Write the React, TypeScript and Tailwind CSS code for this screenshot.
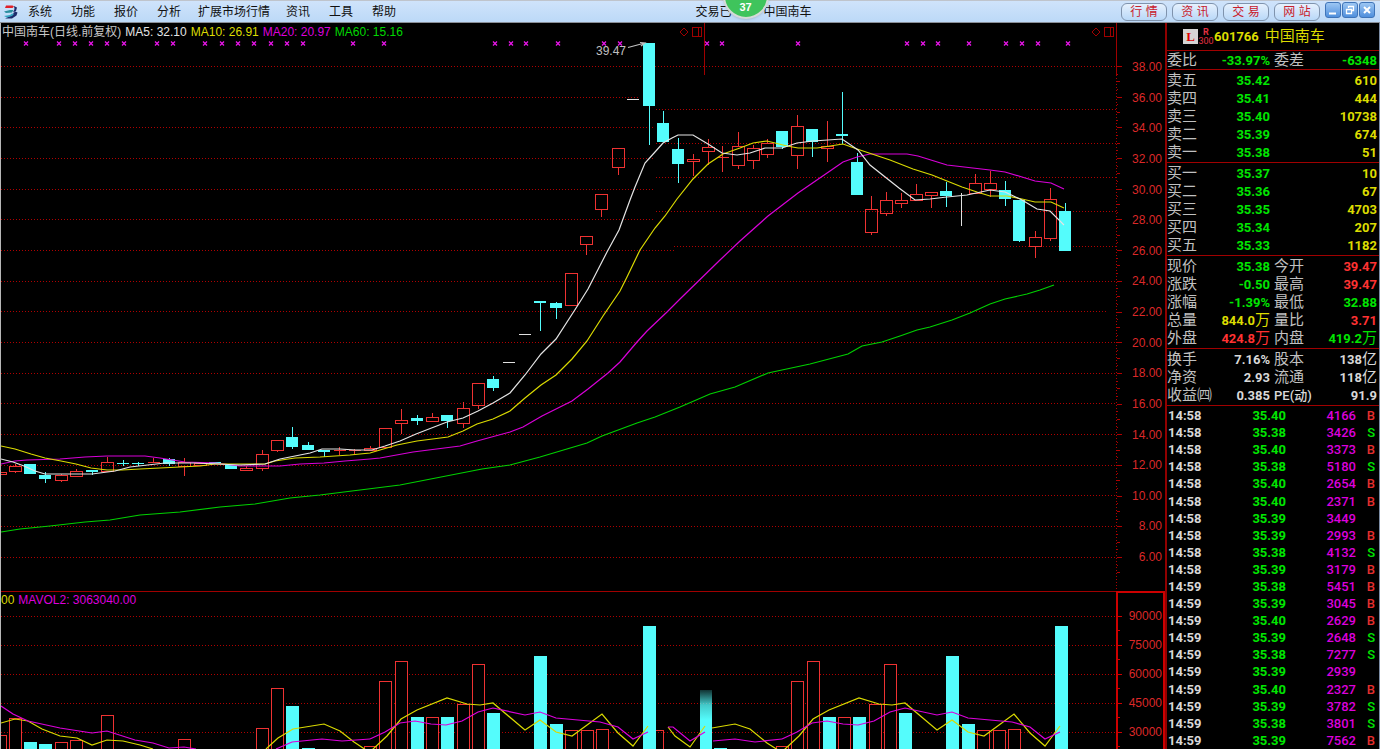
import React from 'react';

type Kind = 'up' | 'down' | 'flat';
// x centre, body top, body bottom, high, low
type Candle = [Kind, number, number, number, number, number];
type Bar = [Kind, number, number];

const SANS = "font-['Liberation_Sans','Noto_Sans_CJK_SC',sans-serif]";
const PANEL = "font-['Roboto','Noto_Sans_CJK_SC',sans-serif]";

const RED = '#ee3232';
const CYAN = '#54fcfc';
const GRID = '#b00000';

const candles: Candle[] = [
  ['up', 0, 472, 474, 472, 474],
  ['up', 15, 466, 471, 464, 473],
  ['down', 30, 464, 474, 464, 474],
  ['down', 45, 475, 479, 472, 483],
  ['up', 61, 475, 480, 474, 482],
  ['up', 76, 471, 476, 469, 476],
  ['down', 92, 470, 472, 470, 475],
  ['up', 107, 462, 471, 457, 471],
  ['down', 123, 463, 464, 460, 466],
  ['down', 138, 463, 464, 462, 466],
  ['up', 153, 462, 463, 458, 463],
  ['down', 169, 459, 464, 458, 466],
  ['up', 184, 462, 466, 458, 476],
  ['up', 200, 463, 465, 463, 465],
  ['down', 215, 462, 464, 462, 464],
  ['down', 231, 465, 469, 465, 469],
  ['up', 246, 468, 470, 466, 470],
  ['up', 262, 454, 468, 450, 471],
  ['up', 277, 440, 450, 440, 452],
  ['down', 292, 437, 447, 427, 449],
  ['down', 308, 445, 450, 442, 450],
  ['down', 324, 450, 452, 450, 457],
  ['up', 339, 450, 451, 447, 455],
  ['up', 354, 450, 451, 449, 454],
  ['up', 370, 448, 450, 446, 450],
  ['up', 385, 428, 447, 428, 447],
  ['up', 401, 420, 423, 409, 434],
  ['down', 417, 418, 421, 415, 425],
  ['up', 432, 417, 421, 413, 421],
  ['down', 447, 415, 421, 415, 428],
  ['up', 463, 408, 423, 402, 428],
  ['up', 478, 383, 405, 383, 409],
  ['down', 493, 379, 388, 376, 391],
  ['flat', 509, 362, 363, 362, 363],
  ['flat', 525, 334, 335, 334, 335],
  ['down', 540, 301, 303, 301, 331],
  ['down', 556, 303, 308, 302, 319],
  ['up', 571, 273, 305, 273, 305],
  ['up', 586, 236, 244, 236, 255],
  ['up', 601, 194, 209, 194, 217],
  ['up', 618, 148, 167, 148, 175],
  ['flat', 633, 99, 100, 99, 100],
  ['down', 649, 43, 106, 43, 145],
  ['down', 663, 123, 142, 111, 142],
  ['down', 678, 149, 164, 138, 183],
  ['up', 693, 159, 161, 154, 176],
  ['up', 708, 147, 151, 139, 165],
  ['up', 722, 157, 158, 146, 172],
  ['up', 738, 146, 165, 132, 169],
  ['up', 753, 148, 160, 145, 169],
  ['up', 767, 143, 154, 139, 158],
  ['down', 782, 131, 147, 131, 149],
  ['up', 797, 126, 155, 115, 169],
  ['down', 812, 129, 142, 129, 157],
  ['up', 827, 146, 148, 121, 162],
  ['down', 842, 134, 136, 92, 144],
  ['down', 857, 162, 195, 153, 195],
  ['up', 871, 209, 232, 196, 235],
  ['up', 886, 200, 213, 192, 216],
  ['up', 901, 200, 203, 193, 208],
  ['up', 916, 194, 200, 184, 200],
  ['up', 931, 192, 195, 192, 208],
  ['down', 946, 191, 196, 182, 207],
  ['flat', 961, 194, 195, 193, 226],
  ['up', 975, 183, 193, 174, 193],
  ['up', 990, 183, 189, 171, 197],
  ['down', 1005, 190, 199, 181, 206],
  ['down', 1019, 200, 241, 200, 242],
  ['up', 1035, 237, 246, 231, 258],
  ['up', 1050, 199, 238, 188, 241],
  ['down', 1065, 211, 251, 203, 251],
];

const ma5 =
  '1,459 13,462 24,466 35,471 45,474 80,474 92,474 115,471 130,467 165,463 195,463 240,465 265,464 280,459 310,453 322,449 340,449 355,450 372,450 385,446 400,441 416,434 447,422 463,418 478,411 493,403 510,393 525,375 541,354 556,339 578,305 588,289 607,252 619,230 630,200 635,187 645,163 655,152 663,143 672,138 678,135 693,135 708,144 722,153 737,155 750,153 765,148 782,148 797,143 813,141 842,139 858,150 870,165 899,188 915,200 930,199 947,197 967,195 990,190 1005,192 1022,200 1037,209 1050,211 1064,225';
const ma10 =
  '1,446 15,449 31,454 45,458 61,461 76,464 91,468 107,470 122,470 140,469 180,467 200,466 215,464 250,464 265,464 275,461 295,458 320,457 350,455 370,453 380,450 397,445 417,441 448,437 463,431 477,424 493,419 510,411 525,398 541,385 556,375 572,359 587,341 603,316 620,291 627,277 640,250 655,228 665,216 677,199 693,179 708,164 723,154 740,148 753,143 767,141 787,146 798,148 817,148 843,144 857,149 890,160 913,169 932,175 947,181 962,187 977,192 990,196 1007,196 1022,199 1035,202 1051,202 1064,208';
const ma20 =
  '1,464 15,461 27,460 60,459 85,457 107,456 145,456 160,458 185,462 215,463 240,466 280,466 300,464 324,463 345,461 370,459 380,458 413,452 460,446 477,441 510,432 523,427 542,416 572,401 588,389 608,373 620,362 637,342 647,331 667,312 680,299 720,260 740,241 768,216 798,193 830,171 843,162 857,157 870,154 907,154 918,156 947,165 990,170 1005,172 1022,177 1035,181 1051,183 1064,189';
const ma60 =
  '1,532 20,529 50,526 85,522 110,520 140,515 180,512 220,507 255,504 290,498 320,495 360,490 400,485 482,469 510,465 540,457 587,443 602,436 637,423 655,417 680,407 710,394 735,387 768,373 810,364 848,354 862,346 882,342 900,336 917,330 930,327 952,320 970,313 990,304 1005,299 1027,294 1040,290 1054,285';

const marks = [
  25, 58, 74, 90, 106, 123, 156, 172, 204, 221, 237, 253, 270, 286, 302, 352, 383, 494, 510, 525, 557, 603, 619,
  706, 721, 797, 906, 922, 937, 968, 1005, 1021, 1037, 1067,
];

// [y, from, to]
const gridLines: [number, number, number][] = [
  [66, 1, 1117], [97, 1, 640], [127, 1, 655], [158, 1, 655], [189, 1, 655], [219, 1, 655], [250, 1, 674],
  [109, 656, 1117], [143, 656, 1117], [177, 656, 1117], [211, 656, 1117], [246, 674, 1117],
  [281, 1, 1117], [311, 1, 1107], [342, 1, 1117], [373, 1, 1117], [403, 1, 1117], [434, 1, 1117],
  [465, 1, 1117], [495, 1, 1117], [526, 1, 1117], [557, 1, 1117],
];

const priceLabels = Array.from({ length: 17 }, (_, i) => (38 - i * 2).toFixed(2));
const priceTicks = Array.from({ length: 67 }, (_, i) => ({
  y: Math.round(66 + (i * 491) / 64),
  len: i % 4 === 0 ? 5 : i % 2 === 0 ? 3 : 1,
}));

const cycle: Bar[] = [
  ['up', 370, 746], ['up', 385, 681], ['up', 401, 661], ['down', 417, 717], ['up', 432, 717], ['down', 447, 717],
  ['up', 463, 704], ['up', 478, 664], ['down', 493, 713], ['down', 540, 656], ['down', 556, 724], ['up', 571, 730],
  ['up', 587, 730], ['up', 602, 729], ['down', 649, 626],
];
const bars: Bar[] = [
  ['up', 0, 735], ['up', 15, 718], ['down', 30, 742], ['down', 45, 744], ['up', 61, 742], ['up', 76, 740],
  ['up', 107, 715], ['up', 184, 739], ['up', 262, 728], ['up', 277, 688], ['down', 292, 706], ['down', 308, 748],
  ...cycle,
  ['down', 720, 748],
  ...cycle.map(([k, x, y]): Bar => [k, x + 412, y]),
];

const volFast: [number, number][] = [
  [372, 750], [387, 736], [401, 719], [417, 710], [447, 698], [467, 704], [480, 705], [493, 703], [525, 730],
  [540, 720], [556, 732], [572, 736], [602, 714], [618, 733], [633, 746], [648, 726],
];
const volSlow: [number, number][] = [
  [370, 739], [385, 732], [400, 723], [415, 721], [431, 724], [446, 725], [462, 721], [478, 712], [493, 708],
  [525, 715], [540, 712], [556, 718], [600, 722], [618, 727], [633, 739], [648, 732],
];
const toPoints = (pts: [number, number][], dx = 0) => pts.map(([x, y]) => `${x + dx},${y}`).join(' ');

interface Quote {
  label: string;
  price: string;
  qty: string;
}

const asks: Quote[] = [
  { label: '卖五', price: '35.42', qty: '610' },
  { label: '卖四', price: '35.41', qty: '444' },
  { label: '卖三', price: '35.40', qty: '10738' },
  { label: '卖二', price: '35.39', qty: '674' },
  { label: '卖一', price: '35.38', qty: '51' },
];
const bids: Quote[] = [
  { label: '买一', price: '35.37', qty: '10' },
  { label: '买二', price: '35.36', qty: '67' },
  { label: '买三', price: '35.35', qty: '4703' },
  { label: '买四', price: '35.34', qty: '207' },
  { label: '买五', price: '35.33', qty: '1182' },
];

const G = 'text-[#00e600]';
const R = 'text-[#ff3232]';
const Y = 'text-[#dcdc00]';
const W = 'text-[#d8d8d8]';

// label, value, unit, colour
type Cell = [string, string, string, string];

const ratio: [Cell, Cell][] = [[['委比', '-33.97%', '', G], ['委差', '-6348', '', G]]];
const stats: [Cell, Cell][] = [
  [['现价', '35.38', '', G], ['今开', '39.47', '', R]],
  [['涨跌', '-0.50', '', G], ['最高', '39.47', '', R]],
  [['涨幅', '-1.39%', '', G], ['最低', '32.88', '', G]],
  [['总量', '844.0', '万', Y], ['量比', '3.71', '', R]],
  [['外盘', '424.8', '万', R], ['内盘', '419.2', '万', G]],
];
const finance: [Cell, Cell][] = [
  [['换手', '7.16%', '', W], ['股本', '138', '亿', W]],
  [['净资', '2.93', '', W], ['流通', '118', '亿', W]],
  [['收益㈣', '0.385', '', W], ['PE(动)', '91.9', '', W]],
];

const trades: [string, string, string, string][] = [
  ['14:58', '35.40', '4166', 'B'],
  ['14:58', '35.38', '3426', 'S'],
  ['14:58', '35.40', '3373', 'B'],
  ['14:58', '35.38', '5180', 'S'],
  ['14:58', '35.40', '2654', 'B'],
  ['14:58', '35.40', '2371', 'B'],
  ['14:58', '35.39', '3449', ''],
  ['14:58', '35.39', '2993', 'B'],
  ['14:58', '35.38', '4132', 'S'],
  ['14:58', '35.39', '3179', 'B'],
  ['14:59', '35.38', '5451', 'B'],
  ['14:59', '35.39', '3045', 'B'],
  ['14:59', '35.40', '2629', 'B'],
  ['14:59', '35.39', '2648', 'S'],
  ['14:59', '35.38', '7277', 'S'],
  ['14:59', '35.39', '2939', ''],
  ['14:59', '35.40', '2327', 'B'],
  ['14:59', '35.39', '3782', 'S'],
  ['14:59', '35.38', '3801', 'S'],
  ['14:59', '35.39', '7562', 'B'],
];

const Logo = () => (
  <svg viewBox="0 0 16 16" className="w-4 h-4 shrink-0" aria-hidden="true">
    <path d="M3 1.500h6.500l1.500 1-1.500 1.500H2z" fill="#e0202a" />
    <path d="M11 2l3 1.500-1 3.500-3 1.500L11.500 5z" fill="#1d2b6b" />
    <path d="M1 7.500l6-1.500h3.500L9 8.500 3 9z" fill="#2b8f9e" />
    <path d="M12 7.500l2.500 1-1 3-4.500 3H2l7-3.500z" fill="#1d2b6b" />
    <path d="M1 12l6-1 2-1.500 2 0.500-2 2-5 1.500z" fill="#35a5c0" />
  </svg>
);

const Header = () => {
  const menus = ['系统', '功能', '报价', '分析'];
  const menus2 = ['资讯', '工具', '帮助'];
  return (
    <header className="relative flex items-center h-[23px] shrink-0 border-t border-[#bfc4cc] border-b border-b-[#8a8f98] bg-gradient-to-b from-[#cfe3fb] to-[#bcd9f7] text-xs text-[#111]">
      <nav className="flex items-center pl-[3px]">
        <Logo />
        {menus.map(m => (
          <button key={m} type="button" className="pl-[9px] pr-[10px]">{m}</button>
        ))}
        <button type="button" className="px-[7px]">扩展市场行情</button>
        {menus2.map(m => (
          <button key={m} type="button" className="pl-[9px] pr-[10px]">{m}</button>
        ))}
      </nav>
      <div className="flex-1 flex justify-center pr-5">
        <div className="relative flex justify-between w-[116px]">
          <span>交易已</span>
          <span>中国南车</span>
          <div className="absolute left-[27px] -top-[31px] flex items-end justify-center w-[46px] h-[46px] pb-[2px] rounded-full border-2 border-[#d5dad8] bg-[#3fc45c] shadow text-[11px] font-bold text-white">
            37
          </div>
        </div>
      </div>
      <div className="flex items-center gap-[5px] pr-[5px]">
        {['行 情', '资 讯', '交 易', '网 站'].map(b => (
          <button
            key={b}
            type="button"
            className="w-[46px] h-[18px] leading-4 rounded-md border border-[#7f93ad] bg-gradient-to-b from-[#e6f1fd] to-[#b9d8f8] text-[#c8202c]"
          >
            {b}
          </button>
        ))}
        <div className="flex gap-px">
          {['min', 'restore', 'close'].map(b => (
            <button
              key={b}
              type="button"
              aria-label={b}
              className="w-4 h-4 mb-1 rounded-[3px] border border-[#3f74b8] bg-gradient-to-b from-[#9cc6f3] to-[#4f8fdc]"
            >
              <svg viewBox="0 0 14 14" className="w-full h-full" fill="none" stroke="#fff">
                {b === 'min' && <path d="M3 10.500h7" strokeWidth="2" />}
                {b === 'restore' && <path d="M5.500 5V3.500h5v4H9M3.500 6.500h5v4h-5z" strokeWidth="1.300" />}
                {b === 'close' && <path d="M4 4l6 6M10 4l-6 6" strokeWidth="2" />}
              </svg>
            </button>
          ))}
        </div>
      </div>
    </header>
  );
};

const CandleShape = ({ c }: { c: Candle }) => {
  const [kind, x, top, bottom, high, low] = c;
  if (kind === 'up') {
    return (
      <g stroke={RED} fill="none">
        <path d={`M${x + 0.5} ${high}V${top}M${x + 0.5} ${bottom}V${low}`} />
        {bottom - top < 2 ? (
          <path d={`M${x - 5} ${top + 0.5}h12M${x + 0.5} ${high}V${low}`} />
        ) : (
          <rect x={x - 5.5} y={top + 0.5} width="12" height={bottom - top} />
        )}
      </g>
    );
  }
  const color = kind === 'down' ? CYAN : '#e0e0e0';
  const onlyWick = kind === 'flat' && low - high > 2;
  return (
    <g fill={color}>
      <rect x={x} y={high} width="1" height={low - high} />
      {!onlyWick && <rect x={x - 6} y={top} width="12" height={bottom - top} />}
    </g>
  );
};

const PriceChart = () => (
  <section className="relative flex flex-1 min-h-0">
    <svg
      viewBox="1 23 1123 568"
      preserveAspectRatio="none"
      shapeRendering="crispEdges"
      className="flex-1 min-w-0 h-full"
      role="img"
      aria-label="日线"
    >
      {gridLines.map(([y, from, to]) => (
        <path key={`${y}-${from}`} d={`M${from} ${y + 0.5}H${to}`} stroke={GRID} strokeDasharray="1 2" />
      ))}
      <path d="M1116.500 75V591" stroke={GRID} strokeDasharray="1 2" />
      {priceTicks.map(t => (
        <path key={t.y} d={`M1117 ${t.y + 0.5}h${t.len}`} stroke={GRID} />
      ))}
      <path d="M704.500 23V75M1116.500 23V75" stroke="#a00000" fill="none" />
      {[684, 1096].map(x => (
        <g key={x} stroke="#a00000" fill="none">
          <path d={`M${x} 28l4 4-4 4-4-4z`} shapeRendering="auto" />
          <path d={`M${x + 8.5} 27.500h9v9h-9zM${x + 14.5} 27v9`} />
        </g>
      ))}
      {marks.map(x => (
        <path key={x} d={`M${x - 1} 41.500l4 4m0-4l-4 4`} stroke="#e815e8" strokeWidth="1.300" shapeRendering="auto" />
      ))}
      {candles.map(c => (
        <CandleShape key={c[1]} c={c} />
      ))}
      <g fill="none" shapeRendering="auto" strokeWidth="1.200">
        <polyline points={ma60} stroke="#00d000" />
        <polyline points={ma20} stroke="#d800d8" />
        <polyline points={ma10} stroke="#dada00" />
        <polyline points={ma5} stroke="#e4e4e4" />
        <path d="M628 47.500L643 43.500M640 42.500l5 0.500-4 3" stroke="#c0c0c0" />
      </g>
      <text x="596" y="55" fontSize="12" fill="#c0c0c0" className={SANS}>39.47</text>
    </svg>
    <div className="absolute left-px top-0 flex gap-1 text-xs leading-[18px] whitespace-nowrap">
      <span className="text-[#c8c8c8]">中国南车(日线.前复权)</span>
      <span className="text-[#e4e4e4]">MA5: 32.10</span>
      <span className="text-[#dcdc00]">MA10: 26.91</span>
      <span className="text-[#dc00dc]">MA20: 20.97</span>
      <span className="text-[#00d800]">MA60: 15.16</span>
    </div>
    <div className="flex flex-col justify-between w-[41px] pt-9 pb-[26px] pr-[3px] text-right text-xs leading-4 text-[#dc2828]">
      {priceLabels.map(p => (
        <span key={p}>{p}</span>
      ))}
    </div>
  </section>
);

const VolumeChart = () => (
  <section className="relative flex h-[158px] shrink-0">
    <svg
      viewBox="1 591 1123 158"
      preserveAspectRatio="none"
      shapeRendering="crispEdges"
      className="flex-1 min-w-0 h-full"
      role="img"
      aria-label="成交量"
    >
      <defs>
        <linearGradient id="fade" x1="0" y1="0" x2="0" y2="1">
          <stop offset="0" stopColor={CYAN} stopOpacity="0.2" />
          <stop offset="0.25" stopColor={CYAN} stopOpacity="0.8" />
          <stop offset="0.5" stopColor={CYAN} />
        </linearGradient>
      </defs>
      <path d="M1 591.500H1116" stroke="#a00000" />
      {[616, 645, 674, 703, 732].map(y => (
        <g key={y}>
          <path d={`M1 ${y + 0.5}H1116`} stroke={GRID} strokeDasharray="1 2" />
          <path d={`M1117 ${y + 0.5}h5M1117 ${y + 14.5}h3`} stroke="#cc0000" />
        </g>
      ))}
      <path d="M1117 749V592H1124" stroke="#cc0000" strokeWidth="2" fill="none" />
      {bars.map(([kind, x, y]) =>
        kind === 'up' ? (
          <rect key={x} x={x - 5.5} y={y + 0.5} width="12" height={760 - y} fill="#000" stroke={RED} />
        ) : (
          <rect key={x} x={x - 6} y={y} width="13" height={760 - y} fill={CYAN} />
        ),
      )}
      <path d="M656 730.500H663.500V749" stroke={RED} fill="none" />
      <rect x="700" y="690" width="12" height="60" fill="url(#fade)" />
      <g fill="none" shapeRendering="auto" strokeWidth="1.200">
        <g stroke="#dada00">
          <polyline points="1,723 15,719 28,721 42,729 60,736 77,738 92,745 107,740 123,741 140,745 153,749" />
          <polyline points="266,749 278,738 293,729 324,724 340,731 354,742 366,750" />
          <polyline points={toPoints(volFast)} />
          <polyline points="668,727 675,736 690,747 705,726" />
          <polyline points="712,728 735,724 750,729 767,743 778,750" />
          <polyline points={toPoints(volFast, 412)} />
        </g>
        <g stroke="#dc00dc">
          <polyline points="1,706 13,714 28,721 60,728 92,733 107,731 135,740 153,743 169,748 184,747 196,749" />
          <polyline points="276,749 292,742 322,739 342,741 370,739" />
          <polyline points={toPoints(volSlow)} />
          <polyline points="668,727 673,727 690,741 705,732" />
          <polyline points="713,741 735,739 755,742 782,739" />
          <polyline points={toPoints(volSlow, 412)} />
        </g>
      </g>
    </svg>
    <div className="absolute left-0 top-0 flex gap-1 text-xs leading-[18px]">
      <span className="text-[#dcdc00]">00</span>
      <span className="text-[#dc00dc]">MAVOL2: 3063040.00</span>
    </div>
    <div className="flex flex-col w-[41px] pt-[9px] pr-px border-t-2 border-r-2 border-[#cc0000] text-right text-xs leading-[29px] text-[#dc2828]">
      {['90000', '75000', '60000', '45000', '30000'].map(v => (
        <span key={v}>{v}</span>
      ))}
    </div>
  </section>
);

const QuoteTable = ({ rows }: { rows: Quote[] }) => (
  <table className="w-full table-fixed border-collapse">
    <tbody>
      {rows.map(q => (
        <tr key={q.label} className="h-[18px]">
          <th scope="row" className="w-[48px] p-0 text-left text-[15px] font-normal text-[#c0c0c0]">{q.label}</th>
          <td className="w-[55px] p-0 text-right font-bold text-[#00e600]">{q.price}</td>
          <td className="p-0 text-right font-bold text-[#dcdc00]">{q.qty}</td>
        </tr>
      ))}
    </tbody>
  </table>
);

const StatTable = ({ rows }: { rows: [Cell, Cell][] }) => (
  <table className="w-full table-fixed border-collapse">
    <colgroup>
      <col className="w-[48px]" />
      <col className="w-[55px]" />
      <col className="w-[46px]" />
      <col />
    </colgroup>
    <tbody>
      {rows.map(row => (
        <tr key={row[0][0]} className="h-[18px]">
          {row.map(([label, value, unit, color], i) => (
            <React.Fragment key={label}>
              <th
                scope="row"
                className={`p-0 text-left whitespace-nowrap ${i ? 'pl-1' : ''} ${
                  label.startsWith('PE')
                    ? 'text-[13px] font-medium text-[#d8d8d8]'
                    : 'text-[15px] font-normal text-[#c0c0c0]'
                }`}
              >
                {label}
              </th>
              <td className={`p-0 text-right font-bold whitespace-nowrap ${color}`}>
                {value}
                {unit && <span className="text-[15px] font-normal">{unit}</span>}
              </td>
            </React.Fragment>
          ))}
        </tr>
      ))}
    </tbody>
  </table>
);

const SidePanel = () => (
  <aside
    className={`flex flex-col w-[215px] shrink-0 border-l-2 border-[#900000] border-r border-r-[#7c8ca4] text-[13px] leading-[17px] ${PANEL}`}
  >
    <div className="flex items-center h-[28px] pl-4 pr-[2px] border-b border-[#a00000] text-[#dcdc00]">
      <span className="w-[15px] h-[15px] bg-[#d4d4d4] text-center font-bold leading-[15px] text-[#e00000] font-['Liberation_Serif',serif]">
        L
      </span>
      <span className="flex flex-col items-center w-4 text-[9px] leading-[9px] text-[#e03040]">
        <b>R</b>
        <span>300</span>
      </span>
      <b className="text-[13px]">601766</b>
      <h1 className="ml-[6px] text-[15px]">中国南车</h1>
    </div>
    <div className="pr-[2px] border-b border-[#a00000]"><StatTable rows={ratio} /></div>
    <div className="pt-px pr-[2px] pb-px border-b border-[#a00000]"><QuoteTable rows={asks} /></div>
    <div className="pt-px pr-[2px] pb-px border-b border-[#a00000]"><QuoteTable rows={bids} /></div>
    <div className="pt-px pr-[2px] pb-px border-b border-[#a00000]"><StatTable rows={stats} /></div>
    <div className="pt-px pr-[2px] pb-px border-b border-[#a00000]"><StatTable rows={finance} /></div>
    <div className="flex-1 min-h-0 pt-px overflow-hidden">
      <table className="w-full h-full table-fixed border-collapse font-bold">
        <tbody>
          {trades.map(([time, price, vol, flag], i) => (
            <tr key={i}>
              <td className="w-[48px] p-0 pl-px text-[#d8d8d8]">{time}</td>
              <td className="w-[71px] p-0 text-right text-[#00e600]">{price}</td>
              <td className="w-[70px] p-0 text-right font-medium text-[#dc00dc]">{vol}</td>
              <td className={`p-0 pr-1 text-right font-medium ${flag === 'B' ? 'text-[#e62e2e]' : 'text-[#00e600]'}`}>
                {flag}
              </td>
            </tr>
          ))}
        </tbody>
      </table>
    </div>
  </aside>
);

export default function App() {
  return (
    <div className={`flex flex-col h-screen overflow-hidden bg-black ${SANS}`}>
      <Header />
      <main className="flex flex-1 min-h-0">
        <div className="flex flex-col flex-1 min-w-0 border-l border-[#b8b8b8]">
          <PriceChart />
          <VolumeChart />
        </div>
        <SidePanel />
      </main>
    </div>
  );
}
